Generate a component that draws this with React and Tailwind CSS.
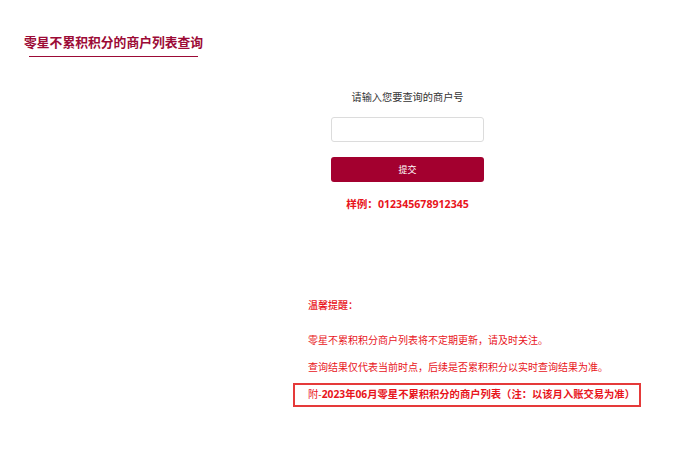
import React, { useState } from 'react';

const App = () => {
  const [merchantNo, setMerchantNo] = useState('');

  return (
    <div
      className="w-[690px] h-[461px] bg-white overflow-hidden"
      style={{ fontFamily: '"Open Sans", "Noto Sans CJK SC", sans-serif' }}
    >
      {/* Header */}
      <div className="pl-[24px] pt-[32px]">
        <h1 className="text-[12.8px] leading-[20px] font-bold text-[#9c0a36]">
          零星不累积积分的商户列表查询
        </h1>
        <div className="ml-[5px] mt-[4px] w-[169px] h-px bg-[#9c0a36]" />
      </div>

      {/* Query form */}
      <div className="ml-[331px] mt-[32px] w-[153px] flex flex-col items-center">
        <p className="text-[10.2px] leading-[16px] text-[#333]">请输入您要查询的商户号</p>
        <input
          value={merchantNo}
          onChange={(e) => setMerchantNo(e.target.value)}
          className="mt-[12px] w-full h-[25px] border border-[#dcdcdc] rounded-[3px] px-2 text-[11px] outline-none"
        />
        <button className="mt-[15px] w-full h-[25px] rounded-[3px] bg-[#a3002f] text-white text-[9px] leading-none">
          提交
        </button>
        <p className="mt-[14px] text-[10.6px] leading-[16px] font-bold text-[#e8141b] whitespace-nowrap">
          样例：012345678912345
        </p>
      </div>

      {/* Notes */}
      <div className="ml-[293px] mt-[86px] w-[348px] text-[10px] text-[#e8141b]">
        <p className="pl-[15px] leading-[14px] font-medium">温馨提醒：</p>
        <p className="pl-[15px] mt-[21px] leading-[14px]">零星不累积积分商户列表将不定期更新，请及时关注。</p>
        <p className="pl-[15px] mt-[13px] leading-[14px]">查询结果仅代表当前时点，后续是否累积积分以实时查询结果为准。</p>
        <div className="mt-[9px] h-[24px] border-2 border-[#e53a3a] flex items-center pl-[13px] whitespace-nowrap text-[10.3px]">
          <span>附-</span>
          <span className="font-bold">2023年06月零星不累积积分的商户列表（注：以该月入账交易为准）</span>
        </div>
      </div>
    </div>
  );
};

export default App;
